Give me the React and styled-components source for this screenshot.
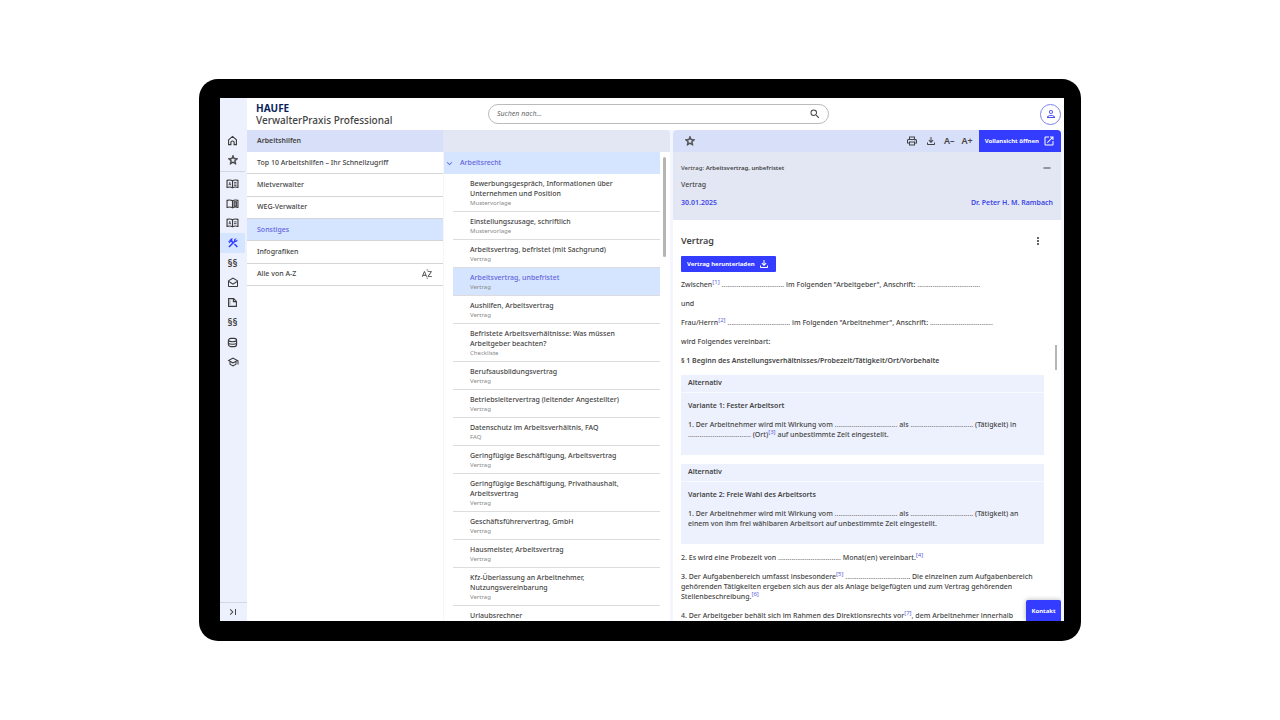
import React, { useState } from "react";
import styled, { createGlobalStyle } from "styled-components";
import {
  MdConstruction,
  MdExpandMore,
  MdLastPage,
  MdMoreVert,
  MdOpenInNew,
  MdOutlineDrafts,
  MdOutlineFileDownload,
  MdOutlinePerson,
  MdOutlinePrint,
  MdOutlineSchool,
  MdRemove,
  MdSearch,
  MdSortByAlpha,
  MdStarOutline,
} from "react-icons/md";

const topics = [
  "Top 10 Arbeitshilfen – Ihr Schnellzugriff",
  "Mietverwalter",
  "WEG-Verwalter",
  "Sonstiges",
  "Infografiken",
  "Alle von A-Z",
];

const documents = [
  {
    title: "Bewerbungsgespräch, Informationen über Unternehmen und Position",
    type: "Mustervorlage",
  },
  { title: "Einstellungszusage, schriftlich", type: "Mustervorlage" },
  { title: "Arbeitsvertrag, befristet (mit Sachgrund)", type: "Vertrag" },
  { title: "Arbeitsvertrag, unbefristet", type: "Vertrag" },
  { title: "Aushilfen, Arbeitsvertrag", type: "Vertrag" },
  {
    title: "Befristete Arbeitsverhältnisse: Was müssen Arbeitgeber beachten?",
    type: "Checkliste",
  },
  { title: "Berufsausbildungsvertrag", type: "Vertrag" },
  { title: "Betriebsleitervertrag (leitender Angestellter)", type: "Vertrag" },
  { title: "Datenschutz im Arbeitsverhältnis, FAQ", type: "FAQ" },
  { title: "Geringfügige Beschäftigung, Arbeitsvertrag", type: "Vertrag" },
  {
    title: "Geringfügige Beschäftigung, Privathaushalt, Arbeitsvertrag",
    type: "Vertrag",
  },
  { title: "Geschäftsführervertrag, GmbH", type: "Vertrag" },
  { title: "Hausmeister, Arbeitsvertrag", type: "Vertrag" },
  {
    title: "Kfz-Überlassung an Arbeitnehmer, Nutzungsvereinbarung",
    type: "Vertrag",
  },
  { title: "Urlaubsrechner" },
];

const HomeIcon = () => (
  <StrokeIcon viewBox="0 0 24 24">
    <path d="M3.5 10.5 12 3l8.5 7.5V21h-5v-4.5a3.5 3.5 0 0 0-7 0V21h-5z" />
  </StrokeIcon>
);

const BookIcon = ({ left, right }) => (
  <WideIcon viewBox="0 0 28 22">
    <path d="M14 4C11 2 6 2 2 3v15.500c4-1 9-1 12 1 3-2 8-2 12-1V3c-4-1-9-1-12 1z" />
    <path d="M14 4v15.500" />
    {left && <path d="M6 14l2-7 2 7M7 12h3" strokeWidth="1.5" />}
    {right === "lines" && (
      <path d="M17 7.500h6M17 11h6M17 14.500h6" strokeWidth="1.8" />
    )}
    {right === "page" && (
      <path d="M17.500 6h5v10h-5z" fill="currentColor" fillOpacity="0.4" />
    )}
    {right === "short" && <path d="M17 8.500h6M17 12.500h6" strokeWidth="2" />}
  </WideIcon>
);

const NoteIcon = () => (
  <StrokeIcon viewBox="0 0 24 24">
    <path d="M3.500 3.500h11l6 6v11h-17z" />
    <path d="M14 4v6h6" />
    <path d="M6.500 7v10" strokeWidth="1" />
  </StrokeIcon>
);

const DatabaseIcon = () => (
  <StrokeIcon viewBox="0 0 24 24">
    <rect x="3" y="3" width="18" height="18" rx="5" />
    <path d="M3 8c2 3 16 3 18 0M3 13.500c2 3 16 3 18 0" />
  </StrokeIcon>
);

const Note = ({ n }) => (
  <Footnote>
    <a href={`#note-${n}`}>[{n}]</a>
  </Footnote>
);

// dotted line to be filled in by hand
const Blank = () => <Dots>.................................</Dots>;

const Rail = () => (
  <RailNav aria-label="Hauptnavigation">
    <RailTop>
      <RailLink href="#home" aria-label="Start">
        <HomeIcon />
      </RailLink>
      <RailLink href="#favoriten" aria-label="Favoriten">
        <StarIcon />
      </RailLink>
    </RailTop>
    <RailGroup>
      <RailLink href="#lexikon" aria-label="Lexikon">
        <BookIcon left right="lines" />
      </RailLink>
      <RailLink href="#handbuch" aria-label="Handbuch">
        <BookIcon right="page" />
      </RailLink>
      <RailLink href="#kommentare" aria-label="Kommentare">
        <BookIcon left right="short" />
      </RailLink>
      <RailLink href="#arbeitshilfen" aria-label="Arbeitshilfen" $active>
        <MdConstruction size={12} />
      </RailLink>
      <RailLink href="#gesetze">§§</RailLink>
      <RailLink href="#news" aria-label="News">
        <MdOutlineDrafts size={12} />
      </RailLink>
      <RailLink href="#notizen" aria-label="Notizen">
        <NoteIcon />
      </RailLink>
      <RailLink href="#urteile">§§</RailLink>
      <RailLink href="#daten" aria-label="Daten">
        <DatabaseIcon />
      </RailLink>
      <RailLink href="#weiterbildung" aria-label="Weiterbildung">
        <MdOutlineSchool size={12} />
      </RailLink>
    </RailGroup>
    <RailToggle aria-label="Navigation ausklappen">
      <MdLastPage size={12} />
    </RailToggle>
  </RailNav>
);

const Header = () => (
  <TopBar>
    <Brand>
      <BrandName>HAUFE</BrandName>
      <Product>VerwalterPraxis Professional</Product>
    </Brand>
    <SearchForm role="search" onSubmit={(ev) => ev.preventDefault()}>
      <SearchInput
        type="text"
        placeholder="Suchen nach..."
        aria-label="Suchen nach"
      />
      <IconButton aria-label="Suchen">
        <MdSearch size={12} />
      </IconButton>
    </SearchForm>
    <Account>
      <AccountButton aria-label="Mein Konto">
        <MdOutlinePerson size={12} />
      </AccountButton>
    </Account>
  </TopBar>
);

const Document = () => (
  <DocumentPanel>
    <Toolbar>
      <IconButton aria-label="Merken">
        <StarIcon />
      </IconButton>
      <Tools>
        <IconButton aria-label="Drucken">
          <MdOutlinePrint size={12} />
        </IconButton>
        <IconButton aria-label="Herunterladen">
          <MdOutlineFileDownload size={12} />
        </IconButton>
        <IconButton>A–</IconButton>
        <IconButton>A+</IconButton>
      </Tools>
      <FullViewButton>
        Vollansicht öffnen
        <MdOpenInNew size={12} />
      </FullViewButton>
    </Toolbar>
    <Meta>
      <MetaRow>
        <Crumb>
          Vertrag: <b>Arbeitsvertrag, unbefristet</b>
        </Crumb>
        <IconButton aria-label="Einklappen">
          <MdRemove size={12} />
        </IconButton>
      </MetaRow>
      <MetaRow>Vertrag</MetaRow>
      <MetaFoot>
        <MetaLink href="#datum">30.01.2025</MetaLink>
        <MetaLink href="#autor">Dr. Peter H. M. Rambach</MetaLink>
      </MetaFoot>
    </Meta>
    <Paper>
      <PaperHead>
        <h2>Vertrag</h2>
        <IconButton aria-label="Weitere Aktionen">
          <MdMoreVert size={12} />
        </IconButton>
      </PaperHead>
      <DownloadButton>
        Vertrag herunterladen
        <MdOutlineFileDownload size={12} />
      </DownloadButton>
      <p>
        Zwischen
        <Note n={1} /> <Blank /> im Folgenden "Arbeitgeber", Anschrift:{" "}
        <Blank />
      </p>
      <p>und</p>
      <p>
        Frau/Herrn
        <Note n={2} /> <Blank /> im Folgenden "Arbeitnehmer", Anschrift:{" "}
        <Blank />
      </p>
      <p>wird Folgendes vereinbart:</p>
      <h3>
        § 1 Beginn des Anstellungsverhältnisses/Probezeit/Tätigkeit/Ort/Vorbehalte
      </h3>
      <Alternative>
        <AlternativeHead>Alternativ</AlternativeHead>
        <AlternativeBody>
          <h3>Variante 1: Fester Arbeitsort</h3>
          <p>
            1. Der Arbeitnehmer wird mit Wirkung vom <Blank /> als <Blank />{" "}
            (Tätigkeit) in <Blank /> (Ort)
            <Note n={3} /> auf unbestimmte Zeit eingestellt.
          </p>
        </AlternativeBody>
      </Alternative>
      <Alternative>
        <AlternativeHead>Alternativ</AlternativeHead>
        <AlternativeBody>
          <h3>Variante 2: Freie Wahl des Arbeitsorts</h3>
          <p>
            1. Der Arbeitnehmer wird mit Wirkung vom <Blank /> als <Blank />{" "}
            (Tätigkeit) an einem von ihm frei wählbaren Arbeitsort auf
            unbestimmte Zeit eingestellt.
          </p>
        </AlternativeBody>
      </Alternative>
      <p>
        2. Es wird eine Probezeit von <Blank /> Monat(en) vereinbart.
        <Note n={4} />
      </p>
      <p>
        3. Der Aufgabenbereich umfasst insbesondere
        <Note n={5} /> <Blank />. Die einzelnen zum Aufgabenbereich gehörenden
        Tätigkeiten ergeben sich aus der als Anlage beigefügten und zum Vertrag
        gehörenden Stellenbeschreibung.
        <Note n={6} />
      </p>
      <p>
        4. Der Arbeitgeber behält sich im Rahmen des Direktionsrechts vor
        <Note n={7} />, dem Arbeitnehmer innerhalb
      </p>
    </Paper>
    <PaperScrollbar />
    <ContactButton>Kontakt</ContactButton>
  </DocumentPanel>
);

const App = () => {
  const [topic, setTopic] = useState("Sonstiges");
  const [current, setCurrent] = useState("Arbeitsvertrag, unbefristet");

  return (
    <Page>
      <GlobalStyle />
      <Device>
        <Screen>
          <Rail />
          <Main>
            <Header />
            <Columns>
              <TopicPanel>
                <PanelHead>Arbeitshilfen</PanelHead>
                <TopicList>
                  {topics.map((name) => (
                    <li key={name}>
                      <TopicButton
                        $active={name === topic}
                        onClick={() => setTopic(name)}
                      >
                        {name}
                        {name === "Alle von A-Z" && <MdSortByAlpha size={12} />}
                      </TopicButton>
                    </li>
                  ))}
                </TopicList>
              </TopicPanel>
              <ListPanel>
                <ListHead />
                <ListArea>
                  <ListScroll>
                    <GroupButton>
                      <MdExpandMore size={11} />
                      Arbeitsrecht
                    </GroupButton>
                    <DocumentList>
                      {documents.map((doc) => (
                        <li key={doc.title}>
                          <DocumentButton
                            $active={doc.title === current}
                            onClick={() => setCurrent(doc.title)}
                          >
                            <DocumentTitle>{doc.title}</DocumentTitle>
                            {doc.type && (
                              <DocumentType>{doc.type}</DocumentType>
                            )}
                          </DocumentButton>
                        </li>
                      ))}
                    </DocumentList>
                  </ListScroll>
                  <ListScrollbar />
                </ListArea>
              </ListPanel>
              <Document />
            </Columns>
          </Main>
        </Screen>
      </Device>
    </Page>
  );
};

const GlobalStyle = createGlobalStyle`
  * {
    box-sizing: border-box;
  }

  body {
    margin: 0;
    background: #fff;
    color: #444;
    font-family: "Noto Sans", "Open Sans", sans-serif;
    font-size: 7px;
    font-weight: 500;
    line-height: 10px;
  }

  h1, h2, h3, p, ul {
    margin: 0;
    padding: 0;
  }

  ul {
    list-style: none;
  }

  a {
    color: inherit;
    text-decoration: none;
  }

  button, input {
    margin: 0;
    padding: 0;
    border: 0;
    background: none;
    color: inherit;
    font: inherit;
  }

  button {
    cursor: pointer;
  }

  svg {
    display: block;
    flex: none;
  }
`;

const Page = styled.div`
  display: flex;
  height: 100vh;
  padding: 79px 199px;
`;

const Device = styled.div`
  display: flex;
  flex: 1;
  min-width: 0;
  padding: 19px 17px 20px 21px;
  border-radius: 19px;
  background: #000;
`;

const Screen = styled.div`
  display: flex;
  flex: 1;
  min-width: 0;
  overflow: hidden;
  background: #fff;
`;

const Main = styled.div`
  display: flex;
  flex-direction: column;
  flex: 1;
  min-width: 0;
`;

// Left rail

const RailNav = styled.nav`
  display: flex;
  flex-direction: column;
  width: 27px;
  padding-top: 32px;
  background: #edf1fd;
`;

const RailTop = styled.div`
  display: grid;
  grid-auto-rows: 20px;
  margin-right: 2px;
  padding-bottom: 1px;
  border-bottom: 1px solid #d3d7e2;
`;

const RailGroup = styled.div`
  display: grid;
  grid-auto-rows: 1fr;
  height: 198px;
  margin-top: 2px;
  padding-right: 2px;
`;

const RailLink = styled.a`
  display: flex;
  align-items: center;
  justify-content: center;
  font-size: 10px;
  font-weight: 600;
  color: ${({ $active }) => ($active ? "#333cff" : "#3a3a3a")};
  background: ${({ $active }) => ($active ? "#d6e5ff" : "transparent")};
`;

const RailToggle = styled.button`
  display: flex;
  align-items: center;
  justify-content: center;
  height: 19px;
  margin-top: auto;
  padding-right: 2px;
  border-top: 1px solid #d3d7e2;
`;

const StrokeIcon = styled.svg`
  width: 11px;
  height: 11px;
  fill: none;
  stroke: currentColor;
  stroke-width: 2.4;
`;

const WideIcon = styled(StrokeIcon)`
  width: 13px;
  height: 10px;
`;

const StarIcon = styled(MdStarOutline)`
  width: 12px;
  height: 12px;
  stroke: currentColor;
  stroke-width: 1;
`;

// Header

const TopBar = styled.header`
  display: flex;
  align-items: center;
  height: 32px;
  padding: 0 3px 0 9px;
`;

const Brand = styled.div`
  flex: 1;
  padding-top: 2px;
`;

const BrandName = styled.div`
  font-size: 10px;
  font-weight: 700;
  line-height: 10px;
  color: #0a1f5c;
`;

const Product = styled.h1`
  font-size: 10px;
  font-weight: 500;
  line-height: 14px;
`;

const SearchForm = styled.form`
  display: flex;
  align-items: center;
  flex: 0 1 341px;
  height: 20px;
  padding: 0 7px 0 8px;
  border: 1px solid #bbb;
  border-radius: 10px;
`;

const SearchInput = styled.input`
  flex: 1;
  min-width: 0;
  outline: none;

  &::placeholder {
    color: #666;
    font-style: italic;
    font-weight: 400;
    opacity: 1;
  }
`;

const Account = styled.div`
  display: flex;
  flex: 1;
  justify-content: flex-end;
`;

const AccountButton = styled.button`
  display: flex;
  align-items: center;
  justify-content: center;
  width: 21px;
  height: 21px;
  border: 1px solid #7d83ee;
  border-radius: 50%;
  color: #4a50ec;
`;

const IconButton = styled.button`
  display: flex;
  align-items: center;
  justify-content: center;
  font-size: 9px;
  font-weight: 600;
`;

// Columns

const Columns = styled.div`
  display: grid;
  grid-template-columns: 196fr 227fr 391fr;
  flex: 1;
  min-height: 0;
  padding-right: 3px;
  background: #f3f6fe;
`;

const TopicPanel = styled.section`
  min-width: 0;
  background: #fff;
`;

const PanelHead = styled.h2`
  height: 22px;
  padding: 0 10px;
  background: #d8dff8;
  font-size: 7px;
  font-weight: 600;
  line-height: 22px;
`;

const TopicList = styled.ul`
  display: grid;
  grid-auto-rows: 1fr;
  height: 134px;

  li {
    display: flex;
  }
`;

const TopicButton = styled.button`
  display: flex;
  align-items: center;
  justify-content: space-between;
  flex: 1;
  padding: 0 10px;
  border-bottom: 1px solid #d4d4d6;
  text-align: left;
  color: ${({ $active }) => ($active ? "#5f64dd" : "#444")};
  background: ${({ $active }) => ($active ? "#d6e5ff" : "transparent")};
`;

const ListPanel = styled.section`
  display: flex;
  flex-direction: column;
  min-width: 0;
  min-height: 0;
`;

const ListHead = styled.div`
  height: 22px;
  border-top-right-radius: 4px;
  background: #e3e7f4;
`;

const ListArea = styled.div`
  display: flex;
  flex: 1;
  min-height: 0;
  border-left: 1px solid #f5f6f9;
  background: #fff;
`;

const ListScroll = styled.div`
  flex: 1;
  min-width: 0;
  overflow: hidden;
`;

const GroupButton = styled.button`
  display: flex;
  align-items: center;
  gap: 5px;
  width: 100%;
  height: 22px;
  background: #d6e5ff;
  color: #5f64dd;

  svg {
    stroke: currentColor;
  }
`;

const DocumentList = styled.ul`
  padding-left: 9px;
`;

const DocumentButton = styled.button`
  display: block;
  width: 100%;
  padding: 5px 17px 4px;
  border-bottom: 1px solid #dcdcde;
  text-align: left;
  color: ${({ $active }) => ($active ? "#5f64dd" : "#444")};
  background: ${({ $active }) => ($active ? "#d6e5ff" : "transparent")};
`;

const DocumentTitle = styled.span`
  display: block;
`;

const DocumentType = styled.span`
  display: block;
  color: #888;
  font-size: 6px;
  font-weight: 400;
  line-height: 8px;
`;

const ListScrollbar = styled.div`
  width: 3px;
  height: 100px;
  margin: 5px 4px 0 3px;
  border-radius: 2px;
  background: #b5b5b5;
`;

// Document

const DocumentPanel = styled.article`
  position: relative;
  display: flex;
  flex-direction: column;
  min-width: 0;
  min-height: 0;
  margin-left: 3px;
  border-radius: 4px 4px 0 0;
  overflow: hidden;
  background: #fff;
`;

const Toolbar = styled.div`
  display: flex;
  align-items: center;
  flex: none;
  height: 22px;
  padding-left: 11px;
  background: #d8dff8;
`;

const Tools = styled.div`
  display: flex;
  align-items: center;
  gap: 7px;
  margin-left: auto;
  margin-right: 6px;
`;

const FullViewButton = styled.button`
  display: flex;
  align-items: center;
  gap: 4px;
  height: 22px;
  padding: 0 6px;
  background: #333cff;
  color: #fff;
  font-size: 6px;
  font-weight: 700;
`;

const Meta = styled.div`
  flex: none;
  height: 68px;
  padding: 7px 8px;
  background: #e3e7f4;
`;

const MetaRow = styled.div`
  display: flex;
  align-items: center;
  justify-content: space-between;
  height: 17px;
`;

const MetaFoot = styled(MetaRow)`
  height: 20px;
`;

const Crumb = styled.span`
  font-size: 6px;

  b {
    font-weight: 600;
  }
`;

const MetaLink = styled.a`
  color: #4047e6;
  font-size: 7px;
  font-weight: 600;
`;

const Paper = styled.div`
  flex: 1;
  min-height: 0;
  padding: 13px 17px 0 8px;
  overflow: hidden;

  h3 {
    font-size: 7px;
    font-weight: 600;
  }

  p,
  h3 {
    margin-bottom: 9px;
  }
`;

const PaperHead = styled.div`
  display: flex;
  align-items: center;
  justify-content: space-between;
  margin-bottom: 7px;

  h2 {
    font-size: 9px;
    font-weight: 600;
    line-height: 16px;
  }
`;

const DownloadButton = styled.button`
  display: flex;
  align-items: center;
  gap: 3px;
  height: 16px;
  margin-bottom: 8px;
  padding: 0 6px;
  border-radius: 1px;
  background: #333cff;
  color: #fff;
  font-size: 6px;
  font-weight: 700;
`;

const Dots = styled.span`
  color: #777;
`;

const Footnote = styled.sup`
  color: #5f64dd;
  font-size: 6px;
  font-weight: 400;
  line-height: 0;
`;

const Alternative = styled.section`
  margin-bottom: 9px;
  background: #edf1fd;
`;

const AlternativeHead = styled.div`
  padding: 3px 7px 4px;
  border-bottom: 1px solid #f8faff;
  font-weight: 600;
`;

const AlternativeBody = styled.div`
  padding: 8px 12px 6px 7px;
`;

const PaperScrollbar = styled.div`
  position: absolute;
  top: 215px;
  right: 4px;
  width: 2px;
  height: 25px;
  background: #b5b5b5;
`;

const ContactButton = styled.button`
  position: absolute;
  right: 0;
  bottom: 0;
  width: 35px;
  height: 21px;
  border-radius: 2px 2px 0 0;
  background: #333cff;
  box-shadow: 0 0 5px rgba(0, 0, 0, 0.3);
  color: #fff;
  font-size: 6px;
  font-weight: 700;
`;

export default App;
